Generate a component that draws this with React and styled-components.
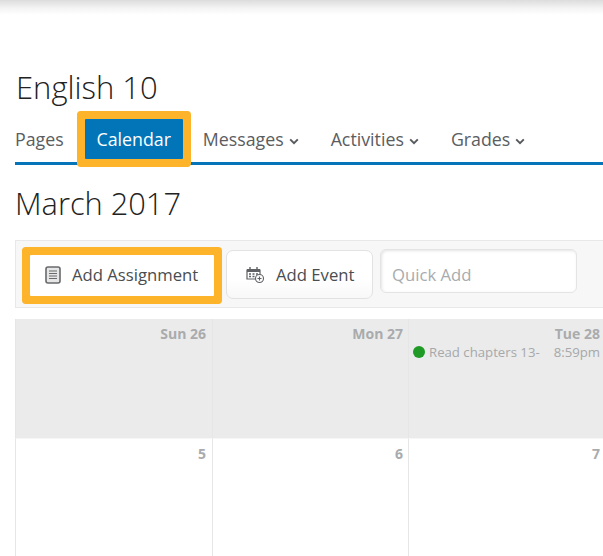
import React from "react";
import styled, { createGlobalStyle } from "styled-components";

const GlobalStyle = createGlobalStyle`
  html, body {
    margin: 0;
    padding: 0;
    background: #fff;
  }
  body {
    font-family: "Open Sans", "Liberation Sans", sans-serif;
  }
`;

const Page = styled.div`
  width: 603px;
  height: 556px;
  overflow: hidden;
  background: #fff;
`;

const TopShadow = styled.div`
  height: 15px;
  background: linear-gradient(#dcdcdc, #f4f4f4 55%, #fff);
`;

const CourseTitle = styled.h1`
  margin: 51px 0 0 16px;
  height: 42px;
  font-size: 31px;
  line-height: 42px;
  font-weight: 300;
  color: #222;
`;

const Nav = styled.nav`
  display: flex;
  align-items: stretch;
  height: 43px;
  margin: 11px 0 0 15px;
  border-bottom: 3px solid #0574b9;
`;

const NavItem = styled.a`
  display: flex;
  align-items: center;
  gap: 5px;
  height: 40px;
  margin-right: ${(p) => p.$gap}px;
  font-size: 17.8px;
  color: #5a5d61;
`;

const ActiveItem = styled.a`
  position: relative;
  display: flex;
  align-items: center;
  justify-content: center;
  width: 98px;
  height: 40px;
  margin-right: 20px;
  background: #0275b9;
  color: #fff;
  font-size: 17.8px;
  box-shadow: 0 0 0 8px #fdb32a;
  border-radius: 1px;
`;

const MonthTitle = styled.h2`
  margin: 17px 0 0 15px;
  height: 42px;
  font-size: 30.8px;
  line-height: 42px;
  font-weight: 300;
  color: #222;
`;

const Toolbar = styled.div`
  display: flex;
  align-items: flex-start;
  box-sizing: border-box;
  height: 68px;
  margin: 16px 0 0 15px;
  padding: 8px 0 0 14px;
  background: #f7f7f7;
  border: 1px solid #e8e8e8;
  border-right: none;
`;

const ToolButton = styled.button`
  display: flex;
  align-items: center;
  box-sizing: border-box;
  flex: none;
  font-family: inherit;
  font-size: 16.7px;
  color: #4a4d50;
  padding: 0;
`;

const AssignmentButton = styled(ToolButton)`
  position: relative;
  width: 184px;
  height: 41px;
  margin: 6px 12px 0 0;
  padding: 0 0 2px 15px;
  gap: 11px;
  background: #fff;
  border: none;
  border-radius: 1px;
  box-shadow: 0 0 0 8px #fdb32a;
`;

const EventButton = styled(ToolButton)`
  width: 147px;
  height: 49px;
  margin: 1px 7px 0 0;
  padding-left: 19px;
  gap: 11px;
  background: linear-gradient(#fff 60%, #f8f8f8);
  border: 1px solid #e2e2e2;
  border-radius: 7px;
`;

const QuickAdd = styled.input`
  box-sizing: border-box;
  flex: none;
  width: 197px;
  height: 44px;
  padding: 6px 11px 0;
  font-family: inherit;
  font-size: 16.7px;
  color: #4a4d50;
  background: #fff;
  border: 1px solid #e4e4e4;
  border-radius: 6px;
  box-shadow: inset 1px 1px 3px #e4e4e4;
  outline: none;
  &::placeholder {
    color: #a8abae;
    opacity: 1;
  }
`;

const CalendarGrid = styled.div`
  display: grid;
  grid-template-columns: 197px 196px 196px;
  grid-auto-rows: 120px;
  width: 640px;
  margin: 11px 0 0 15px;
`;

const DayCell = styled.div`
  box-sizing: border-box;
  padding: 5px ${(p) => p.$right}px 0 4px;
  overflow: hidden;
  background: ${(p) => (p.$past ? "#ebebeb" : "#fff")};
  border-left: 1px solid #e6e6e6;
  border-bottom: 1px solid ${(p) => (p.$past ? "#f6f6f6" : "#e6e6e6")};
`;

const DayLabel = styled.div`
  height: 20px;
  font-size: 14px;
  line-height: 20px;
  font-weight: 700;
  text-align: right;
  color: #a9abad;
`;

const EventRow = styled.div`
  display: flex;
  align-items: center;
  height: 15px;
  font-size: 13.2px;
  color: #a6a8aa;
`;

const EventDot = styled.span`
  flex: none;
  width: 12px;
  height: 12px;
  margin-right: 4px;
  border-radius: 50%;
  background: #1f9a24;
`;

const EventName = styled.span`
  flex: 1;
  white-space: nowrap;
  overflow: hidden;
`;

const Chevron = () => (
  <svg width="10" height="7" viewBox="0 0 10 7" fill="none" style={{ marginTop: 4 }}>
    <path d="M1.2 1.4 5 5.2l3.8-3.8" stroke="#55585c" strokeWidth="1.9" />
  </svg>
);

const AssignmentIcon = () => (
  <svg width="16" height="18" viewBox="0 0 16 18" fill="none">
    <rect x="1" y="1" width="14" height="16" rx="2" fill="#e6e6e6" stroke="#67696c" strokeWidth="1.6" />
    <path d="M4 5h8M4 7.5h8M4 10h8M4 12.500h8" stroke="#67696c" strokeWidth="1.2" />
  </svg>
);

const EventIcon = () => (
  <svg width="19" height="18" viewBox="0 0 19 18" fill="none">
    <path d="M1 4h13v9H1z" fill="#fff" stroke="#5f6164" strokeWidth="1.2" />
    <path d="M1 3h13v3H1z" fill="#5f6164" />
    <path d="M4 1v3M11 1v3" stroke="#5f6164" strokeWidth="1.4" />
    <path d="M3 8h2M6.500 8h2M10 8h2M3 10.500h2M6.500 10.500h2" stroke="#5f6164" strokeWidth="1.4" />
    <circle cx="13.500" cy="12.500" r="4" fill="#fff" stroke="#5f6164" strokeWidth="1.1" />
    <path d="M11.500 12.500h4M13.500 10.500v4" stroke="#5f6164" strokeWidth="1.1" />
  </svg>
);

export default function App() {
  return (
    <Page>
      <GlobalStyle />
      <TopShadow />
      <CourseTitle>English 10</CourseTitle>
      <Nav>
        <NavItem $gap={21}>Pages</NavItem>
        <ActiveItem>Calendar</ActiveItem>
        <NavItem $gap={32}>Messages <Chevron /></NavItem>
        <NavItem $gap={32}>Activities <Chevron /></NavItem>
        <NavItem $gap={0}>Grades <Chevron /></NavItem>
      </Nav>
      <MonthTitle>March 2017</MonthTitle>
      <Toolbar>
        <AssignmentButton><AssignmentIcon />Add Assignment</AssignmentButton>
        <EventButton><EventIcon />Add Event</EventButton>
        <QuickAdd placeholder="Quick Add" />
      </Toolbar>
      <CalendarGrid>
        <DayCell $past $right={6}><DayLabel>Sun 26</DayLabel></DayCell>
        <DayCell $past $right={5}><DayLabel>Mon 27</DayLabel></DayCell>
        <DayCell $past $right={4}>
          <DayLabel>Tue 28</DayLabel>
          <EventRow>
            <EventDot />
            <EventName>Read chapters 13-</EventName>
            <span>8:59pm</span>
          </EventRow>
        </DayCell>
        <DayCell $right={6}><DayLabel>5</DayLabel></DayCell>
        <DayCell $right={5}><DayLabel>6</DayLabel></DayCell>
        <DayCell $right={4}><DayLabel>7</DayLabel></DayCell>
      </CalendarGrid>
    </Page>
  );
}
